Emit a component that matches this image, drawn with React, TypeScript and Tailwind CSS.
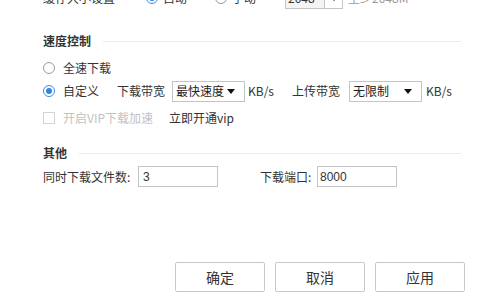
import React from "react";

const font = { fontFamily: '"Noto Sans CJK SC", "Microsoft YaHei", sans-serif' };

function Radio({ checked }: { checked?: boolean }) {
  return (
    <span
      className={
        "flex h-[12px] w-[12px] shrink-0 items-center justify-center rounded-full border bg-white " +
        (checked ? "border-[#3b8de0]" : "border-[#9a9a9a]")
      }
    >
      {checked && <span className="h-[6px] w-[6px] rounded-full bg-[#2f86e0]" />}
    </span>
  );
}

function Select({ value }: { value: string }) {
  return (
    <div className="flex h-[21px] w-[73px] shrink-0 items-center justify-between border border-[#c4c4c4] bg-white pl-[3px] pr-[9px] text-[12px] text-[#222]">
      <span>{value}</span>
      <span className="h-0 w-0 border-l-[4px] border-r-[4px] border-t-[5px] border-l-transparent border-r-transparent border-t-[#111]" />
    </div>
  );
}

function Heading({ title }: { title: string }) {
  return (
    <div className="flex h-[16px] items-center">
      <span className="text-[12px] font-semibold text-[#333]">{title}</span>
      <div className="ml-[12px] h-px flex-1 bg-[#ebebeb]" />
    </div>
  );
}

export default function App() {
  return (
    <div className="h-[307px] w-[485px] overflow-hidden bg-white text-[12px] leading-none text-[#333]" style={font}>
      <div className="pl-[43px] pr-[24px]">
        {/* top row, cut off by the window */}
        <div className="-mt-[13px] flex h-[22px] items-center">
          <span className="w-[103px]">缓存大小设置</span>
          <Radio checked />
          <span className="ml-[5px] w-[52px]">自动</span>
          <Radio />
          <span className="ml-[5px] w-[53px]">手动</span>
          <div className="flex h-[22px] w-[58px] border border-[#c4c4c4]">
            <span className="flex-1 bg-[#f4f4f4] pl-[2px] pt-[4px] text-[12px]">2048</span>
            <span className="flex w-[18px] items-center justify-center border-l border-[#c4c4c4] bg-white">
              <span className="h-0 w-0 border-l-[4px] border-r-[4px] border-t-[5px] border-l-transparent border-r-transparent border-t-[#111]" />
            </span>
          </div>
          <span className="ml-[5px] text-[#999]">至少2048M</span>
        </div>

        <div className="mt-[24px]">
          <Heading title="速度控制" />
        </div>

        <div className="mt-[11px] flex h-[16px] items-center">
          <Radio />
          <span className="ml-[8px]">全速下载</span>
        </div>

        <div className="mt-[4px] flex h-[22px] items-center">
          <Radio checked />
          <span className="ml-[8px] w-[36px]">自定义</span>
          <span className="ml-[18px]">下载带宽</span>
          <div className="ml-[7px]">
            <Select value="最快速度" />
          </div>
          <span className="ml-[3px]">KB/s</span>
          <span className="ml-[18px]">上传带宽</span>
          <div className="ml-[9px]">
            <Select value="无限制" />
          </div>
          <span className="ml-[4px]">KB/s</span>
        </div>

        <div className="mt-[8px] flex h-[16px] items-center">
          <span className="h-[12px] w-[12px] border border-[#d4d4d4] bg-white" />
          <span className="ml-[8px] w-[92px] text-[#c2c2c2]">开启VIP下载加速</span>
          <span className="ml-[14px]">立即开通vip</span>
        </div>

        <div className="mt-[19px]">
          <Heading title="其他" />
        </div>

        <div className="mt-[5px] flex h-[21px] items-center">
          <span className="w-[95px]">同时下载文件数:</span>
          <div className="flex h-[21px] w-[80px] items-center border border-[#c4c4c4] pl-[4px] text-[12px]" style={{ fontFamily: '"Liberation Sans", sans-serif' }}>
            3
          </div>
          <span className="ml-[42px] w-[57px]">下载端口:</span>
          <div className="flex h-[21px] w-[80px] items-center border border-[#c4c4c4] pl-[2px] text-[12px]" style={{ fontFamily: '"Liberation Sans", sans-serif' }}>
            8000
          </div>
        </div>
      </div>

      <div className="mt-[75px] flex justify-end gap-[10px] pr-[20px]">
        {["确定", "取消", "应用"].map((t) => (
          <button
            key={t}
            className="flex h-[30px] w-[90px] items-center justify-center rounded-[2px] border border-[#c8c8c8] bg-white text-[14px] text-[#333]"
          >
            {t}
          </button>
        ))}
      </div>
    </div>
  );
}
